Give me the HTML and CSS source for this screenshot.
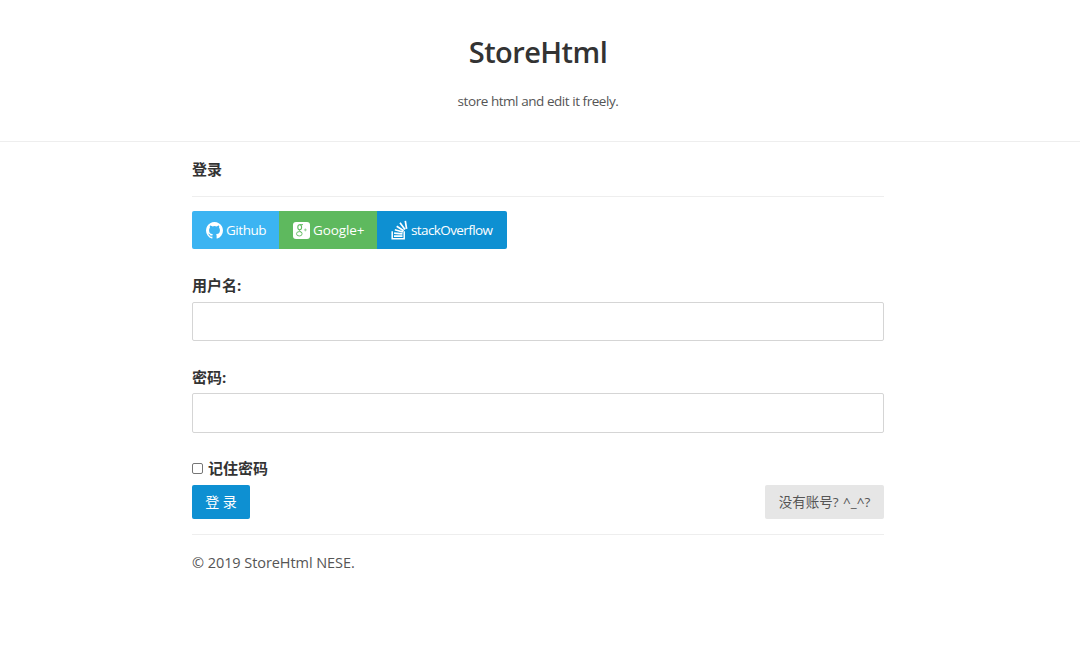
FILE: index.html
```html
<!DOCTYPE html>
<html lang="zh">
<head>
<meta charset="utf-8">
<title>StoreHtml</title>
<link rel="stylesheet" href="styles.css">
</head>
<body>
<header class="header">
  <h1 class="brand">StoreHtml</h1>
  <p class="tagline">store html and edit it freely.</p>
</header>
<main class="content">
  <h3 class="title">登录</h3>
  <hr class="rule">
  <div class="social">
    <a class="social-btn github">
      <svg class="icon" viewBox="0 0 1536 1536"><path fill="currentColor" d="M768 0q209 0 385.500 103t279.500 279.500 103 385.500q0 251-146.500 451.500t-378.500 277.500q-27 5-40-7t-13-30q0-3 .5-76.500t.5-134.500q0-97-52-142 57-6 102.500-18t94-39 81-66.500 53-105 20.500-150.500q0-119-79-206 37-91-8-204-28-9-81 11t-92 44l-38 24q-93-26-192-26t-192 26q-16-11-42.500-27t-83.500-38.500-85-13.500q-45 113-8 204-79 87-79 206 0 85 20.500 150t52.500 105 80.500 67 94 39 102.500 18q-39 36-49 103-21 10-45 15t-57 5-65.500-21.500-55.500-62.500q-19-32-48.500-52t-49.500-24l-20-3q-21 0-29 4.500t-5 11.500 9 14 13 12l7 5q22 10 43.500 38t31.500 51l10 23q13 38 44 61.500t67 30 69.500 7 55.500-3.500l23-4q0 38 .5 88.500t.5 54.500q0 18-13 30t-40 7q-232-77-378.500-277.500t-146.500-451.500q0-209 103-385.500t279.500-279.500 385.500-103z"/></svg>
      <span>Github</span>
    </a>
    <a class="social-btn google">
      <svg class="icon" viewBox="0 0 17 17"><rect width="17" height="17" rx="3" fill="currentColor"/><g fill="none" stroke="#5eb95e"><ellipse cx="6.700" cy="5.200" rx="1.900" ry="2.500" stroke-width="1.100"/><path d="M6.700 2.600h3.300M6.800 7.800c-1.400 1 .8 1.300 1.900 2.700" stroke-width=".9"/><ellipse cx="6.300" cy="11.800" rx="2.800" ry="2.200" stroke-width=".9"/><path d="M10.900 7.900h2.900M12.350 6.450v2.900" stroke-width=".6"/></g></svg>
      <span>Google+</span>
    </a>
    <a class="social-btn stack">
      <svg class="icon tall" viewBox="0 0 17 20"><g fill="none" stroke="currentColor"><path d="M1.200 11.300v7.500h12v-7.500" stroke-width="1.500"/><path d="M3 16.200h8.500M3.100 13.100l8.400.8M3.800 9.700l8.100 2.300M5.700 6.200l7 4.500M9 2.800l5 6.600M14.300.8l1.300 8" stroke-width="1.700"/></g></svg>
      <span>stackOverflow</span>
    </a>
  </div>
  <form class="form">
    <label class="label" for="user">用户名:</label>
    <input class="field" id="user" type="text">
    <label class="label second" for="pass">密码:</label>
    <input class="field" id="pass" type="password">
    <label class="remember"><input class="check" type="checkbox"><span>记住密码</span></label>
    <div class="actions">
      <button class="btn primary" type="button">登 录</button>
      <button class="btn plain" type="button">没有账号? <span class="face">^_^?</span></button>
    </div>
  </form>
  <hr class="rule">
  <p class="copyright">© 2019 StoreHtml NESE.</p>
</main>
</body>
</html>
```
FILE: styles.css
```css
* { box-sizing: border-box; }
body { margin: 0; background: #fff; color: #333; font: 15px/24px "Open Sans", "Noto Sans CJK SC", sans-serif; }
.header { height: 142px; padding: 30px 4px 0 0; border-bottom: 1px solid #eee; text-align: center; }
.brand { margin: 0; font-size: 29px; line-height: 44px; font-weight: 600; letter-spacing: -.55px; }
.tagline { margin: 16px 0 0; font-size: 13.500px; line-height: 22px; color: #555; letter-spacing: -.45px; }
.content { width: 692px; margin-left: 192px; }
.title { margin: 0; padding: 15px 0; font-size: 15px; line-height: 24px; font-weight: 700; }
.rule { height: 1px; margin: 0; border: 0; background: #eee; }
.social { display: flex; margin-top: 14px; height: 38px; }
.social-btn { display: flex; align-items: center; gap: 3px; padding-left: 14px; color: #fff; font-size: 13.500px; letter-spacing: -.45px; white-space: nowrap; }
.github { width: 87px; background: #3bb4f2; border-radius: 2px 0 0 2px; }
.google { width: 98px; background: #5eb95e; letter-spacing: -.1px; }
.stack { width: 130px; background: #0e90d2; border-radius: 0 2px 2px 0; letter-spacing: -.6px; }
.icon { width: 17px; height: 17px; flex: none; }
.tall { height: 20px; }
.form { margin-top: 24px; }
.label { display: block; height: 24px; margin-bottom: 5px; font-weight: 700; }
.second { margin-top: 24px; margin-bottom: 4px; }
.field { display: block; width: 100%; height: 39px; padding: 7px; border: 1px solid #d5d5d5; border-radius: 2px; outline: 0; background: #fff; font: inherit; }
#pass { height: 40px; }
.remember { display: flex; align-items: center; gap: 5px; margin-top: 23px; height: 24px; font-weight: 700; }
.check { width: 11px; height: 11px; margin: 0; appearance: none; border: 1px solid #767676; border-radius: 2px; background: #fff; }
.actions { display: flex; justify-content: space-between; margin: 5px 0 15px; }
.btn { height: 34px; padding: 0; border: 0; border-radius: 2px; font: 14px/24px "Open Sans", "Noto Sans CJK SC", sans-serif; }
.primary { width: 58px; background: #0e90d2; color: #fff; }
.plain { width: 119px; background: #e6e6e6; color: #555; font-size: 13.500px; }
.face { margin-left: 1px; }
.copyright { margin: 16px 0 0; font-size: 14.500px; letter-spacing: -.07px; color: #555; }
```
